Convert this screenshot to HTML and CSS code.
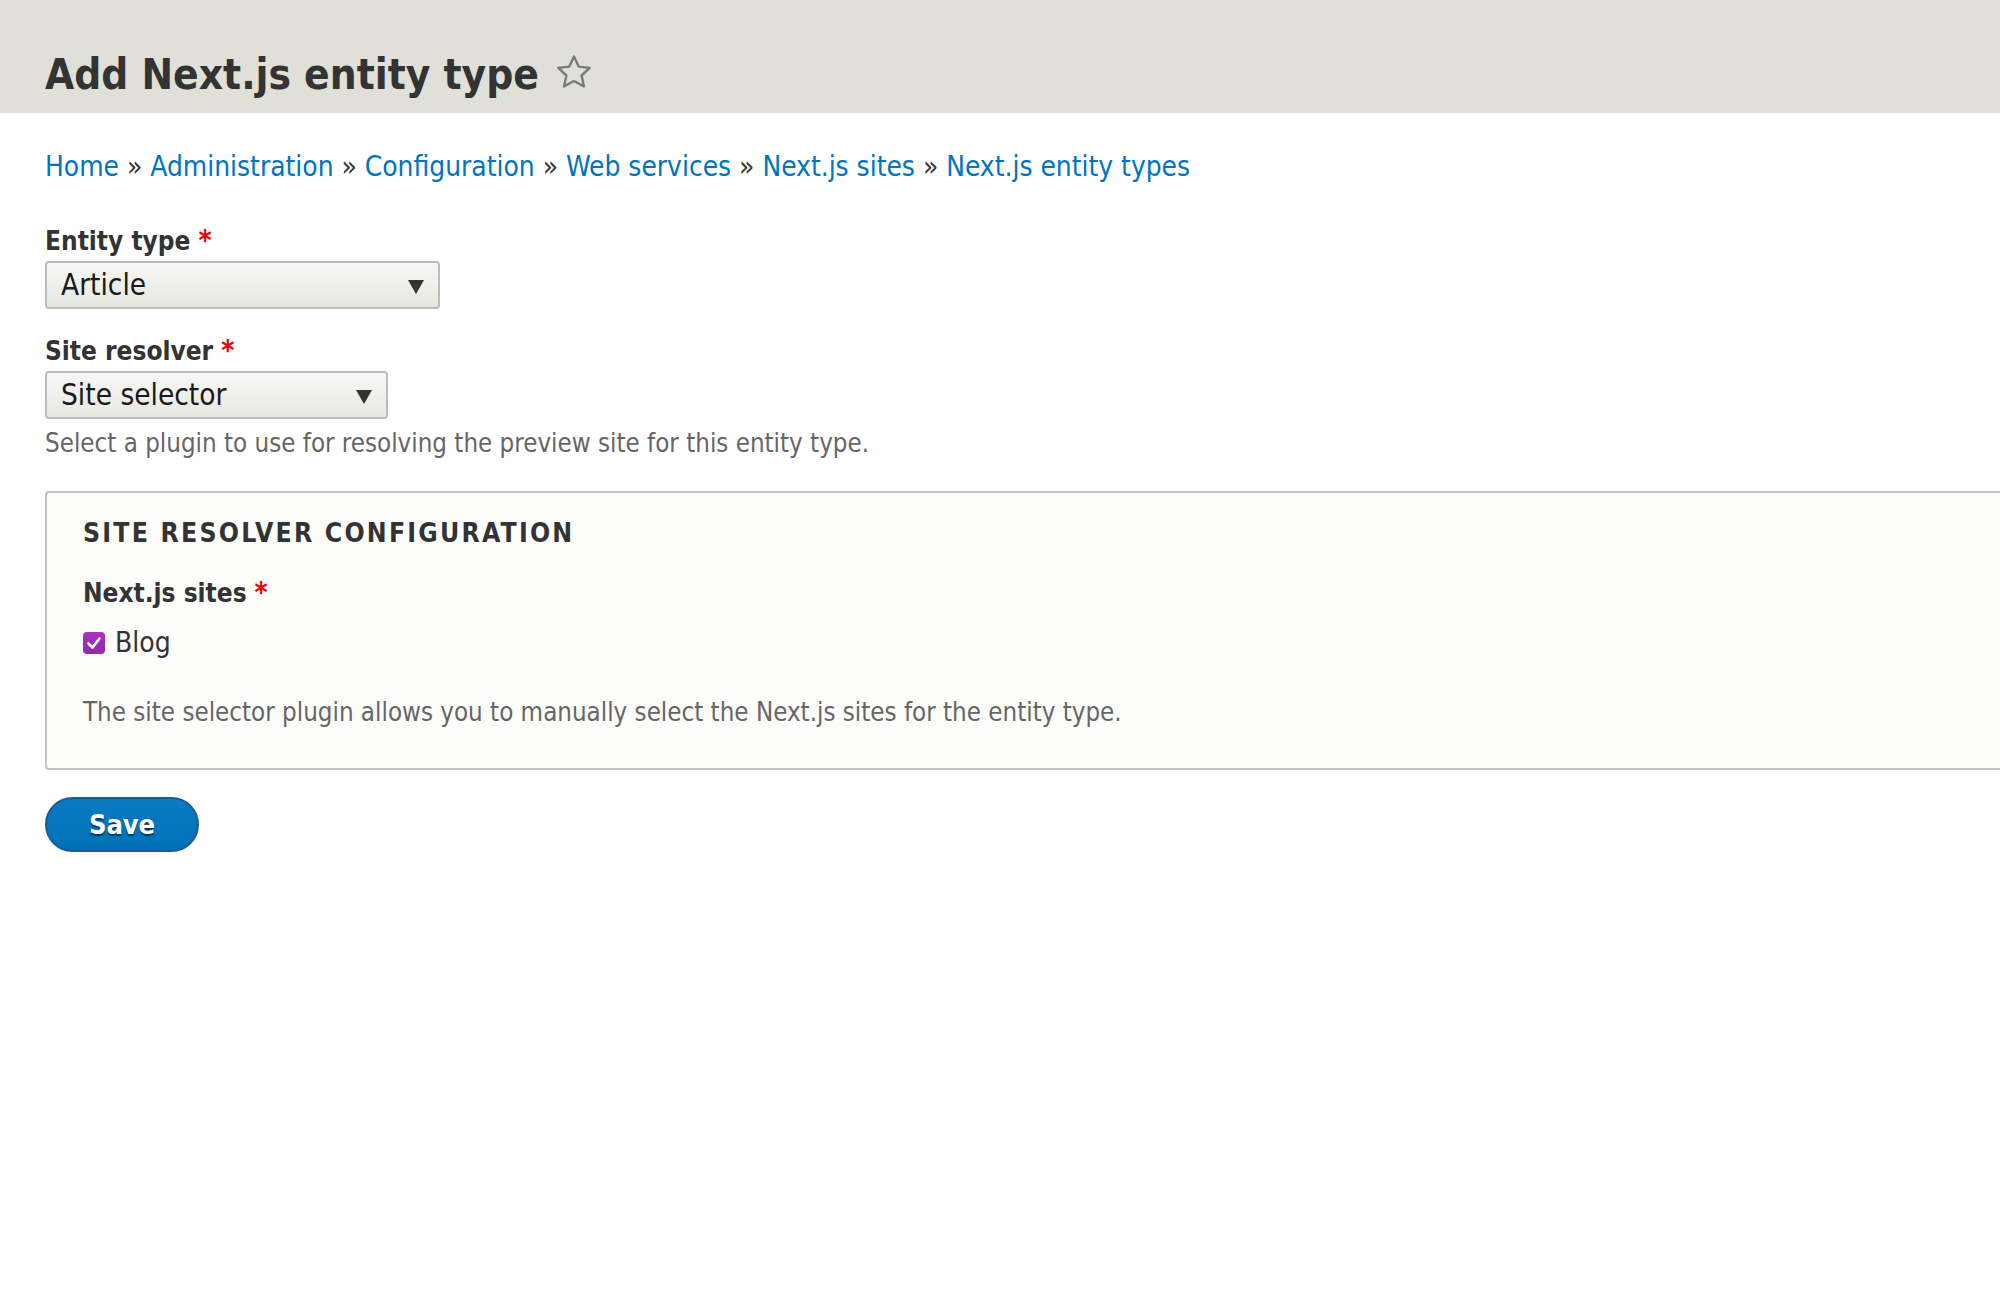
FILE: index.html
```html
<!DOCTYPE html>
<html lang="en">
<head>
<meta charset="utf-8">
<title>Add Next.js entity type</title>
<link rel="stylesheet" href="styles.css">
</head>
<body>
<header class="page-header">
  <h1 class="page-title">Add Next.js entity type <a class="shortcut" href="#" aria-label="Add to Default shortcuts"><svg class="shortcut-star" width="36" height="36" viewBox="0 0 36 36"><polygon points="18,2.5 22.7,12.6 33.7,13.9 25.6,21.5 28,32.4 18,27 8,32.4 10.4,21.5 2.3,13.9 13.3,12.6" fill="none" stroke="#7b7b78" stroke-width="2.4" stroke-linejoin="round"/></svg></a></h1>
</header>
<main class="content">
  <nav class="breadcrumb">
    <a href="#">Home</a> <span class="sep">»</span> <a href="#">Administration</a> <span class="sep">»</span> <a href="#">Configuration</a> <span class="sep">»</span> <a href="#">Web services</a> <span class="sep">»</span> <a href="#">Next.js sites</a> <span class="sep">»</span> <a href="#">Next.js entity types</a>
  </nav>
  <form class="form">
    <div class="form-item">
      <label class="form-label">Entity type<span class="req">*</span></label>
      <div class="select-wrap select-wrap--entity">
        <select class="form-select"><option>Article</option></select>
      </div>
    </div>
    <div class="form-item">
      <label class="form-label">Site resolver<span class="req">*</span></label>
      <div class="select-wrap select-wrap--resolver">
        <select class="form-select"><option>Site selector</option></select>
      </div>
      <div class="description">Select a plugin to use for resolving the preview site for this entity type.</div>
    </div>
    <div class="fieldset">
      <div class="legend">Site resolver configuration</div>
      <div class="fieldset-item">
        <div class="form-label">Next.js sites<span class="req">*</span></div>
        <label class="checkbox-row">
          <span class="checkbox"><svg width="22" height="22" viewBox="0 0 22 22"><polyline points="5.5,11.5 9.5,15.5 16.5,6.5" fill="none" stroke="#fff" stroke-width="2.6" stroke-linecap="round" stroke-linejoin="round"/></svg></span>
          <span class="checkbox-label">Blog</span>
        </label>
      </div>
      <div class="description description--fieldset">The site selector plugin allows you to manually select the Next.js sites for the entity type.</div>
    </div>
    <div class="actions">
      <button type="button" class="button button--primary">Save</button>
    </div>
  </form>
</main>
</body>
</html>
```
FILE: styles.css
```css
html, body {
  overflow-x: hidden;
}
body {
  margin: 0;
  background: #fff;
  color: #333;
  font-family: "DejaVu Sans Condensed", "DejaVu Sans", sans-serif;
  font-stretch: semi-condensed;
}
.page-header {
  background: #e0e0d8;
  height: 113px;
  box-sizing: border-box;
  padding: 54px 45px 0;
}
.page-title {
  margin: 0;
  font-size: 42px;
  line-height: 42px;
  font-weight: 700;
  color: #333;
}
.shortcut {
  display: inline-block;
  margin-left: 4px;
  vertical-align: -1px;
  line-height: 0;
}
.shortcut-star {
  display: block;
}
.content {
  padding: 34px 0 0 45px;
}
.breadcrumb {
  font-size: 27.85px;
  line-height: 40px;
}
.breadcrumb a {
  color: #0074bd;
  text-decoration: none;
}
.breadcrumb .sep {
  color: #333;
}
.form {
  margin-top: 36px;
}
.form-item + .form-item {
  margin-top: 24px;
}
.form-label {
  display: block;
  font-size: 26px;
  line-height: 36px;
  font-weight: 700;
  color: #333;
}
.req {
  color: #e00;
  margin-left: 8px;
  font-size: 28px;
}
.select-wrap {
  position: relative;
  margin-top: 2px;
}
.select-wrap--entity {
  width: 395px;
}
.select-wrap--resolver {
  width: 343px;
}
.select-wrap::after {
  content: "";
  position: absolute;
  right: 16px;
  top: 19px;
  border-left: 8px solid transparent;
  border-right: 8px solid transparent;
  border-top: 14px solid #333;
  pointer-events: none;
}
.form-select {
  display: block;
  width: 100%;
  height: 48px;
  box-sizing: border-box;
  appearance: none;
  -webkit-appearance: none;
  border: 2px solid #bcbcbc;
  border-radius: 4px;
  background: linear-gradient(#f7f7f5, #e7e7e2);
  font-family: inherit;
  font-stretch: inherit;
  font-size: 29.5px;
  color: #1a1a1a;
  padding: 0 44px 0 14px;
}
.description {
  margin-top: 6px;
  font-size: 25.7px;
  line-height: 36px;
  color: #666;
}
.fieldset {
  margin: 30px -40px 0 0;
  border: 2px solid #c2c2c2;
  border-radius: 4px;
  background: #fcfcfa;
  padding: 22px 28px 38px 36px;
}
.legend {
  font-size: 26.4px;
  line-height: 36px;
  font-weight: 700;
  text-transform: uppercase;
  letter-spacing: 2.2px;
  color: #333;
}
.fieldset-item {
  margin-top: 24px;
}
.checkbox-row {
  margin-top: 12px;
  display: flex;
  align-items: center;
  gap: 10px;
  font-size: 28px;
  line-height: 40px;
  color: #333;
}
.checkbox {
  width: 22px;
  height: 22px;
  border-radius: 4px;
  background: linear-gradient(#a635bb, #922aa8);
  display: inline-flex;
  align-items: center;
  justify-content: center;
}
.checkbox svg {
  display: block;
}
.description--fieldset {
  margin-top: 31px;
}
.actions {
  margin-top: 27px;
}
.button {
  display: block;
  width: 154px;
  height: 55px;
  box-sizing: border-box;
  border-radius: 28px;
  font-family: inherit;
  font-stretch: inherit;
  font-size: 27px;
  font-weight: 700;
  cursor: pointer;
}
.button--primary {
  border: 2px solid #1e5c90;
  background: linear-gradient(#0a7ac4, #0070b6);
  color: #fff;
  text-shadow: 0 2px 1px rgba(0, 0, 0, 0.5);
}
```
